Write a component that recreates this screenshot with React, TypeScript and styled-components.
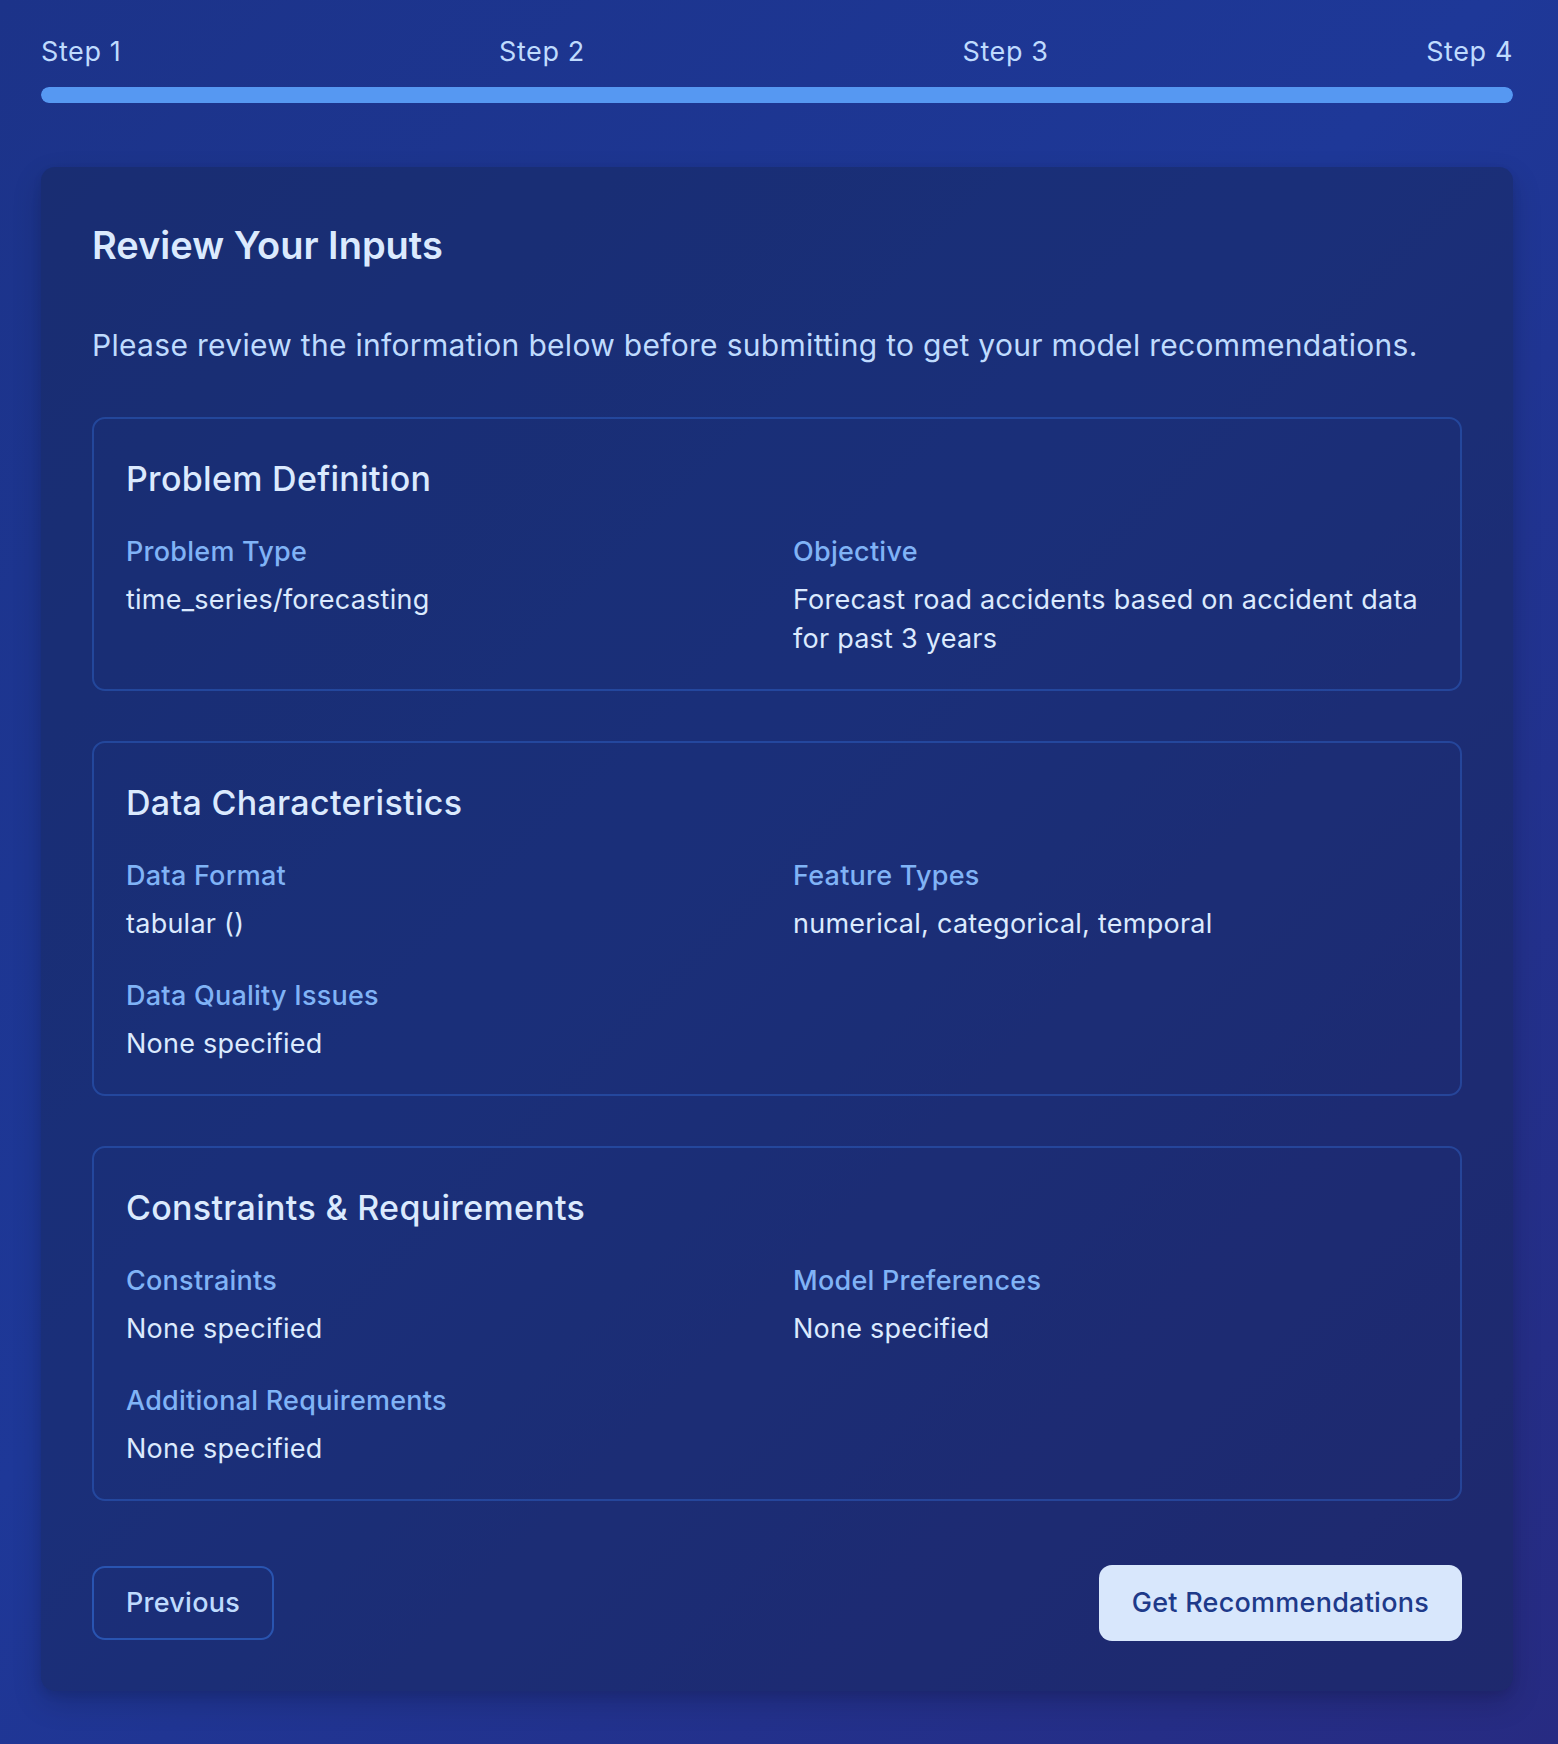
import React from "react";
import styled, { createGlobalStyle } from "styled-components";

const GlobalStyle = createGlobalStyle`
  html, body {
    margin: 0;
    padding: 0;
  }
  body {
    min-height: 1744px;
    font-family: "Inter", "Noto Sans", sans-serif;
    background: linear-gradient(135deg, #1c3389 0%, #1e3898 45%, #272b82 100%);
    -webkit-font-smoothing: antialiased;
  }
  * { box-sizing: border-box; }
`;

const Page = styled.div`
  min-height: 1744px;
  padding: 32px 45px 54px 41px;
`;

const Stepper = styled.div`
  display: flex;
  flex-direction: column;
  gap: 16px;
`;

const StepLabels = styled.div`
  display: flex;
  justify-content: space-between;
`;

const StepLabel = styled.span`
  font-size: 27px;
  line-height: 39px;
  letter-spacing: 0.6px;
  color: #bfdbfe;
`;

const Track = styled.div`
  height: 16px;
  border-radius: 8px;
  background: rgba(59, 130, 246, 0.25);
  overflow: hidden;
`;

const Fill = styled.div`
  height: 100%;
  border-radius: 8px;
  background: #5698f2;
`;

const Card = styled.main`
  margin-top: 64px;
  padding: 52px 51px 50px 51px;
  border-radius: 14px;
  background: rgba(23, 37, 84, 0.45);
  box-shadow: 0 12px 30px rgba(0, 0, 0, 0.16), 0 4px 10px rgba(0, 0, 0, 0.08);
`;

const Title = styled.h1`
  margin: 0;
  font-size: 38px;
  line-height: 52px;
  font-weight: 600;
  color: #dbeafe;
`;

const Intro = styled.p`
  margin: 52px 0 0;
  font-size: 30px;
  line-height: 45px;
  letter-spacing: 0.3px;
  color: #bfdbfe;
`;

const Sections = styled.div`
  margin-top: 49px;
  display: flex;
  flex-direction: column;
  gap: 50px;
`;

const Section = styled.section`
  border: 2px solid rgba(59, 130, 246, 0.3);
  border-radius: 13px;
  padding: 39px 32px 31px 32px;
`;

const SectionTitle = styled.h2`
  margin: 0;
  font-size: 34px;
  line-height: 42px;
  font-weight: 500;
  letter-spacing: 0.3px;
  color: #dbeafe;
`;

const Fields = styled.div`
  margin-top: 32px;
  display: grid;
  grid-template-columns: 1fr 1fr;
  column-gap: 32px;
  row-gap: 33px;
`;

const Field = styled.div`
  display: flex;
  flex-direction: column;
  gap: 9px;
`;

const Label = styled.div`
  font-size: 27px;
  line-height: 39px;
  font-weight: 500;
  letter-spacing: 0.25px;
  color: #80b3f6;
`;

const Value = styled.div`
  font-size: 27px;
  line-height: 39px;
  letter-spacing: 0.25px;
  color: #dbeafe;
`;

const Actions = styled.div`
  margin-top: 64px;
  display: flex;
  justify-content: space-between;
  align-items: center;
`;

const Button = styled.button<{ $primary?: boolean }>`
  font-family: inherit;
  font-size: 27px;
  line-height: 38px;
  font-weight: 500;
  letter-spacing: 0.25px;
  border-radius: 13px;
  cursor: pointer;
  padding: ${(p) => (p.$primary ? "19px 33px" : "16px 32px")};
  border: ${(p) => (p.$primary ? "none" : "2px solid rgba(59, 130, 246, 0.45)")};
  background: ${(p) => (p.$primary ? "#d8e7fc" : "transparent")};
  color: ${(p) => (p.$primary ? "#1e3a8a" : "#bfdbfe")};
`;

type FieldData = { label: string; value: string };

const sections: { title: string; fields: FieldData[] }[] = [
  {
    title: "Problem Definition",
    fields: [
      { label: "Problem Type", value: "time_series/forecasting" },
      {
        label: "Objective",
        value: "Forecast road accidents based on accident data for past 3 years",
      },
    ],
  },
  {
    title: "Data Characteristics",
    fields: [
      { label: "Data Format", value: "tabular ()" },
      { label: "Feature Types", value: "numerical, categorical, temporal" },
      { label: "Data Quality Issues", value: "None specified" },
    ],
  },
  {
    title: "Constraints & Requirements",
    fields: [
      { label: "Constraints", value: "None specified" },
      { label: "Model Preferences", value: "None specified" },
      { label: "Additional Requirements", value: "None specified" },
    ],
  },
];

export default function App() {
  return (
    <>
      <GlobalStyle />
      <Page>
        <Stepper>
          <StepLabels>
            <StepLabel>Step 1</StepLabel>
            <StepLabel>Step 2</StepLabel>
            <StepLabel>Step 3</StepLabel>
            <StepLabel>Step 4</StepLabel>
          </StepLabels>
          <Track>
            <Fill style={{ width: "100%" }} />
          </Track>
        </Stepper>
        <Card>
          <Title>Review Your Inputs</Title>
          <Intro>
            Please review the information below before submitting to get your model
            recommendations.
          </Intro>
          <Sections>
            {sections.map((s) => (
              <Section key={s.title}>
                <SectionTitle>{s.title}</SectionTitle>
                <Fields>
                  {s.fields.map((f) => (
                    <Field key={f.label}>
                      <Label>{f.label}</Label>
                      <Value>{f.value}</Value>
                    </Field>
                  ))}
                </Fields>
              </Section>
            ))}
          </Sections>
          <Actions>
            <Button>Previous</Button>
            <Button $primary>Get Recommendations</Button>
          </Actions>
        </Card>
      </Page>
    </>
  );
}
